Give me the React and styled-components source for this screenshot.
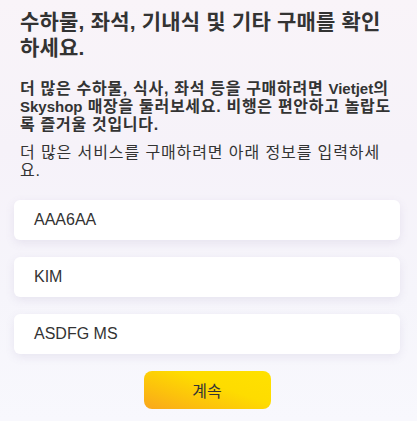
import React from "react";
import styled, { createGlobalStyle } from "styled-components";

const Global = createGlobalStyle`
  html, body { margin: 0; padding: 0; }
  body {
    width: 417px;
    height: 421px;
    overflow: hidden;
    font-family: "Liberation Sans", "Noto Sans CJK KR", sans-serif;
    color: #333;
    background: linear-gradient(180deg, #f9f4f9 0%, #f6f2f9 35%, #f6f5fb 70%, #f8f8fd 100%);
  }
`;

const Page = styled.div`
  box-sizing: border-box;
  width: 417px;
  height: 421px;
  padding: 9px 17px 0 14px;
  display: flex;
  flex-direction: column;
`;

const TextBlock = styled.div`
  padding: 0 0 0 6px;
`;

const Title = styled.h1`
  margin: 0;
  font-size: 21px;
  line-height: 26px;
  font-weight: 700;
  letter-spacing: 0.2px;
  color: #333;
`;

const Paragraph = styled.p`
  margin: ${(p) => (p.$lead ? "19px" : "10px")} 0 0;
  font-size: 16px;
  line-height: 18px;
  font-weight: ${(p) => (p.$lead ? 700 : 400)};
  letter-spacing: ${(p) => (p.$lead ? "0.7px" : "0.9px")};
  color: #333;
`;

const Latin = styled.span`
  font-size: 15px;
  letter-spacing: 0;
`;

const Fields = styled.div`
  margin-top: 20px;
  display: flex;
  flex-direction: column;
  gap: 17px;
`;

const Field = styled.div`
  box-sizing: border-box;
  height: 40px;
  background: #fff;
  border-radius: 6px;
  box-shadow: 0 3px 10px rgba(120, 110, 160, 0.12);
  display: flex;
  align-items: center;
  padding-left: 20px;
  font-size: 16px;
  color: #333;
`;

const Actions = styled.div`
  display: flex;
  justify-content: center;
  margin-top: 17px;
`;

const Button = styled.button`
  width: 127px;
  height: 38px;
  border: none;
  border-radius: 8px;
  background: linear-gradient(200deg, #ffe100 0%, #fedc00 40%, #fcc20c 70%, #f9a61c 100%);
  font-family: "Liberation Sans", "Noto Sans CJK KR", sans-serif;
  font-size: 16px;
  color: #333;
  cursor: pointer;
`;

export default function App() {
  return (
    <>
      <Global />
      <Page>
        <TextBlock>
          <Title>
            수하물, 좌석, 기내식 및 기타 구매를 확인
            <br />
            하세요.
          </Title>
          <Paragraph $lead>
            더 많은 수하물, 식사, 좌석 등을 구매하려면 <Latin>Vietjet</Latin>의
            <br />
            <Latin>Skyshop</Latin> 매장을 둘러보세요. 비행은 편안하고 놀랍도
            <br />
            록 즐거울 것입니다.
          </Paragraph>
          <Paragraph>
            더 많은 서비스를 구매하려면 아래 정보를 입력하세
            <br />
            요.
          </Paragraph>
        </TextBlock>
        <Fields>
          <Field>AAA6AA</Field>
          <Field>KIM</Field>
          <Field>ASDFG MS</Field>
        </Fields>
        <Actions>
          <Button>계속</Button>
        </Actions>
      </Page>
    </>
  );
}
